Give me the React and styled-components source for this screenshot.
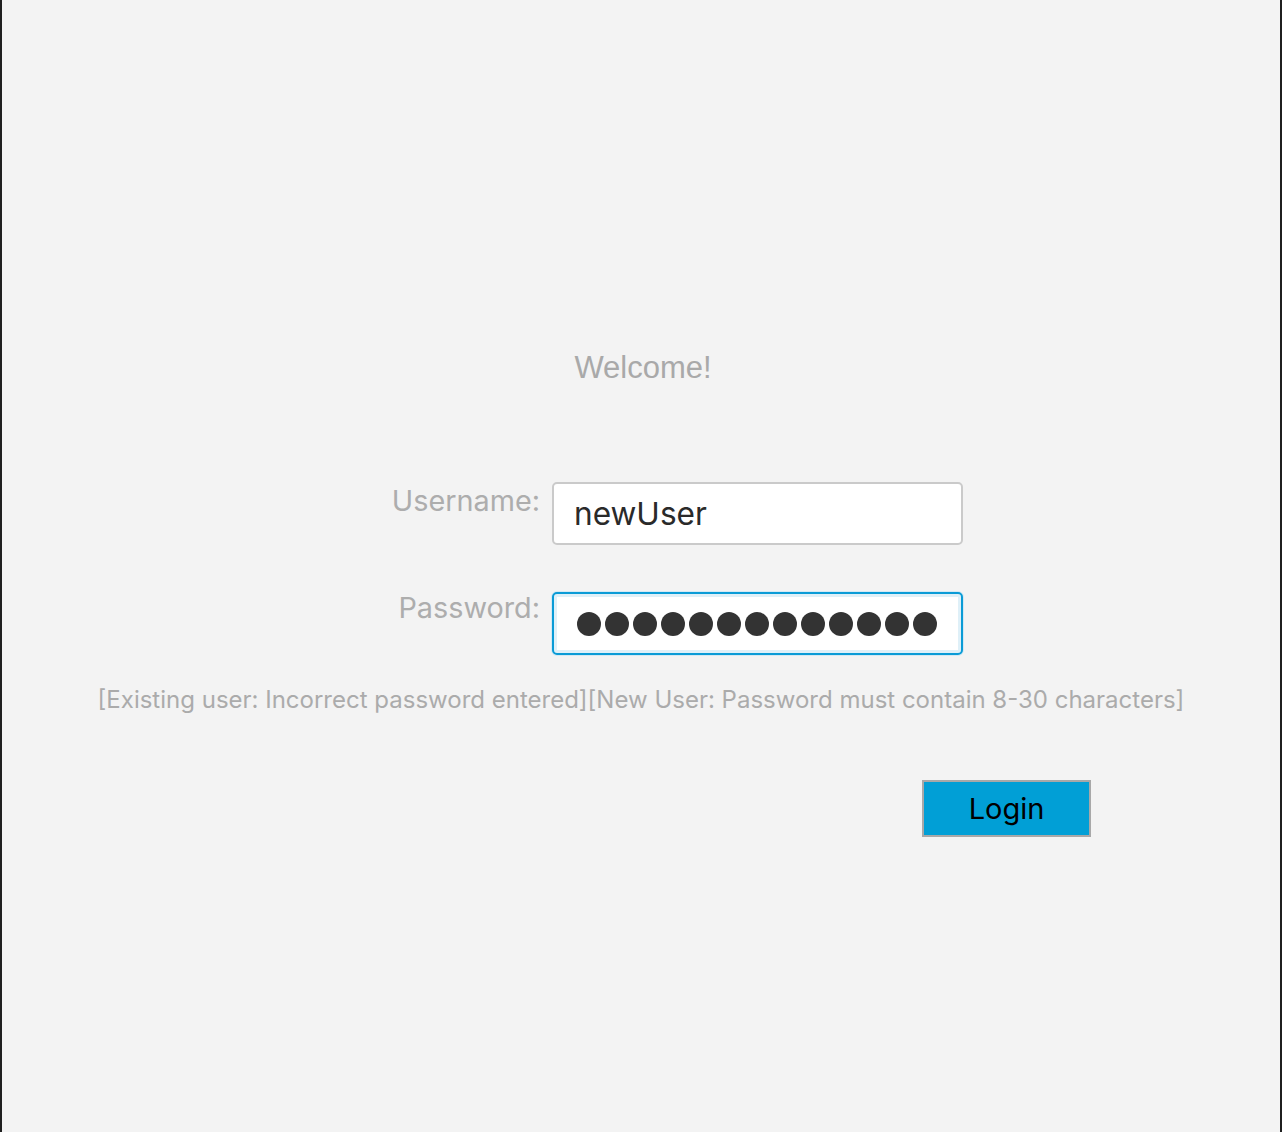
import styled, { createGlobalStyle } from "styled-components";

const GlobalStyle = createGlobalStyle`
  html, body {
    margin: 0;
    padding: 0;
    background: #f3f3f3;
  }
  * {
    box-sizing: border-box;
  }
`;

const DOTS = 13;

function App() {
  return (
    <>
      <GlobalStyle />
      <Page>
        <Welcome>Welcome!</Welcome>
        <Form>
          <Label>Username:</Label>
          <TextInput type="text" defaultValue="newUser" readOnly />
          <Label $shift={-3}>Password:</Label>
          <Field $focused>
            {Array.from({ length: DOTS }).map((_, i) => (
              <Dot key={i} />
            ))}
          </Field>
        </Form>
        <Message>
          [Existing user: Incorrect password entered][New User: Password must
          contain 8-30 characters]
        </Message>
        <ButtonRow>
          <LoginButton>Login</LoginButton>
        </ButtonRow>
      </Page>
    </>
  );
}

const Page = styled.div`
  width: 1282px;
  min-height: 1132px;
  padding-top: 350px;
  background: #f3f3f3;
  border-left: 2px solid #1f1f1f;
  border-right: 2px solid #1f1f1f;
  display: flex;
  flex-direction: column;
`;

const Welcome = styled.h1`
  margin: 0;
  padding-left: 4px;
  font-family: "Liberation Sans", Arial, sans-serif;
  font-weight: 400;
  font-size: 31px;
  line-height: 36px;
  color: #a9a9a9;
  text-align: center;
`;

const Form = styled.div`
  margin-top: 96px;
  display: grid;
  grid-template-columns: 538px 411px;
  column-gap: 12px;
  row-gap: 47px;
`;

const Label = styled.label`
  margin-top: ${(props) => props.$shift || 0}px;
  padding-top: 2px;
  font-family: Inter, "Noto Sans", sans-serif;
  font-size: 28.8px;
  line-height: 34px;
  color: #adadad;
  text-align: right;
`;

const TextInput = styled.input`
  width: 411px;
  height: 63px;
  padding: 0 0 0 20px;
  border: 2px solid #cacaca;
  border-radius: 5px;
  background: #ffffff;
  font-family: Inter, "Noto Sans", sans-serif;
  font-size: 31.6px;
  color: #2a2a2a;
  outline: none;
`;

const Field = styled.div`
  width: 411px;
  height: 63px;
  padding-left: 23px;
  display: flex;
  align-items: center;
  gap: 4px;
  background: #ffffff;
  border: 2px solid ${(props) => (props.$focused ? "#0a9bd6" : "#cacaca")};
  border-radius: 5px;
  box-shadow: ${(props) =>
    props.$focused
      ? "0 0 0 1px #d3e9f4, inset 0 0 0 3px #dff0f8"
      : "none"};
`;

const Dot = styled.span`
  width: 24px;
  height: 24px;
  border-radius: 50%;
  background: #333333;
  flex-shrink: 0;
`;

const Message = styled.p`
  margin: 31px 0 0;
  font-family: Inter, "Noto Sans", sans-serif;
  font-size: 24px;
  line-height: 28px;
  color: #ababab;
  text-align: center;
`;

const ButtonRow = styled.div`
  margin-top: 66px;
  padding-left: 920px;
  display: flex;
`;

const LoginButton = styled.button`
  width: 169px;
  height: 57px;
  padding: 0;
  background: #019fd6;
  border: 2px solid #a8a8a8;
  border-radius: 0;
  font-family: Inter, "Noto Sans", sans-serif;
  font-size: 29px;
  color: #000000;
  cursor: pointer;
`;

export default App;
